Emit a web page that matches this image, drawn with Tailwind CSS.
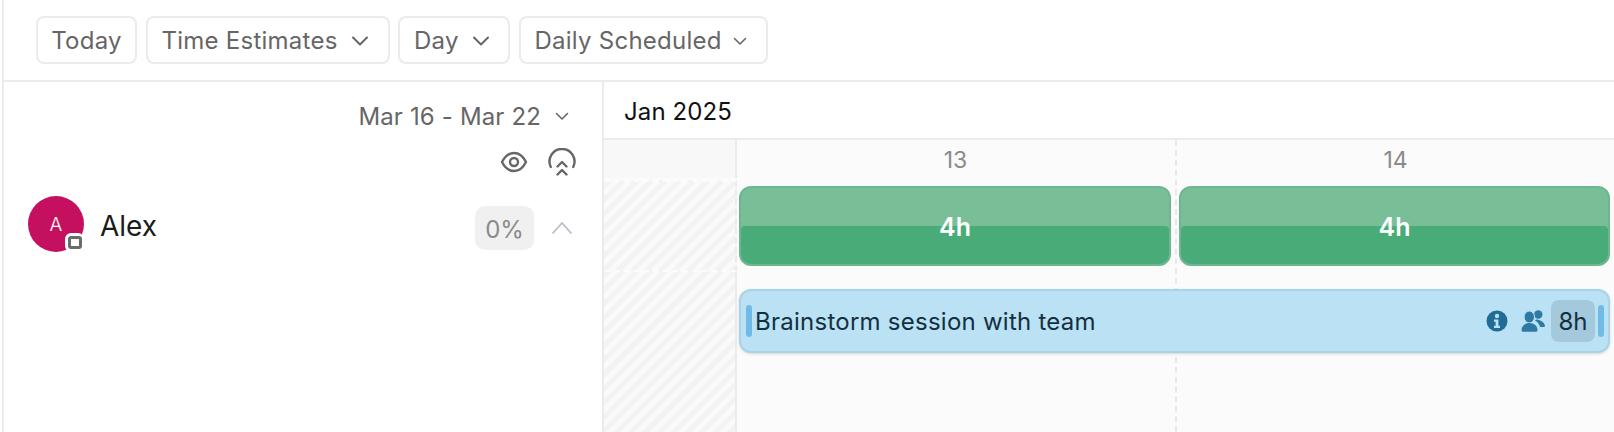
<!DOCTYPE html>
<html lang="en">
<head>
<meta charset="utf-8">
<title>Timeline</title>
<script src="https://cdn.jsdelivr.net/npm/@tailwindcss/browser@4"></script>
</head>
<body class="bg-white">
<div class="w-[1612px] h-[432px] overflow-hidden flex flex-col border-l-2 ml-[2px] border-[#ebebeb] font-['Inter',sans-serif] text-[#666666]">

  <!-- Toolbar -->
  <div class="h-[82px] shrink-0 border-b-2 border-[#ebebeb] flex items-start gap-[8.5px] pl-[32px] pt-[16px] text-[24px] leading-none tracking-[0.25px]">
    <button class="h-[48px] w-[101px] border-2 border-[#ebebeb] rounded-[8px] pt-[2px] flex items-center justify-center">Today</button>
    <button class="h-[48px] w-[244px] border-2 border-[#ebebeb] rounded-[8px] pt-[2px] flex items-center gap-[13px] pl-[14px]">
      Time Estimates
      <svg class="w-[18px] h-[18px]" viewBox="0 0 18 18" fill="none" stroke="#666" stroke-width="2" stroke-linecap="round" stroke-linejoin="round"><path d="M2 5.500 9 12.500 16 5.500"/></svg>
    </button>
    <button class="h-[48px] w-[112px] border-2 border-[#ebebeb] rounded-[8px] pt-[2px] flex items-center gap-[13px] pl-[14px]">
      Day
      <svg class="w-[18px] h-[18px]" viewBox="0 0 18 18" fill="none" stroke="#666" stroke-width="2" stroke-linecap="round" stroke-linejoin="round"><path d="M2 5.500 9 12.500 16 5.500"/></svg>
    </button>
    <button class="h-[48px] w-[249px] border-2 border-[#ebebeb] rounded-[8px] pt-[2px] flex items-center gap-[11px] pl-[14px]">
      Daily Scheduled
      <svg class="w-[14px] h-[14px]" viewBox="0 0 14 14" fill="none" stroke="#666" stroke-width="1.600" stroke-linecap="round" stroke-linejoin="round"><path d="M1.500 4.500 7 10 12.500 4.500"/></svg>
    </button>
  </div>

  <div class="flex flex-1 min-h-0">
    <!-- Left panel -->
    <div class="w-[600px] shrink-0 border-r-2 border-[#ebebeb] relative">
      <div class="flex justify-end items-center gap-[14px] pr-[33px] pt-[19px] text-[24px] leading-[28px] tracking-[0.15px]">
        <span class="mt-[2px]">Mar 16 - Mar 22</span>
        <svg class="w-[14px] h-[14px]" viewBox="0 0 14 14" fill="none" stroke="#666" stroke-width="1.600" stroke-linecap="round" stroke-linejoin="round"><path d="M1.500 4.500 7 10 12.500 4.500"/></svg>
      </div>
      <div class="flex justify-end items-center gap-[20px] pr-[26px] mt-[17px] h-[28px]">
        <svg class="w-[28px] h-[22px]" viewBox="0 0 28 22" fill="none" stroke="#666" stroke-width="2.400"><path d="M2 11C5 5 9 2 14 2s9 3 12 9c-3 6-7 9-12 9S5 17 2 11Z" stroke-linejoin="round"/><circle cx="14" cy="11" r="4"/></svg>
        <svg class="w-[28px] h-[28px]" viewBox="0 0 28 28" fill="none" stroke="#666" stroke-width="2.400" stroke-linecap="round" stroke-linejoin="round"><path d="M2.800 19A12.500 12.500 0 1 1 25.200 19"/><path d="M9.500 18.500 14 14 18.500 18.500"/><path d="M9.500 26.500 14 22 18.500 26.500"/></svg>
      </div>
      <div class="flex items-start pl-[24px] mt-[20px] pr-[29px]">
        <div class="relative w-[56px] h-[56px] rounded-full bg-[#c5105f] text-white text-[19px] font-light pt-[3px] flex items-center justify-center shrink-0">
          A
          <span class="absolute right-0 bottom-0 w-[19px] h-[19px] rounded-[6px] bg-white flex items-center justify-center">
            <span class="w-[14px] h-[13px] rounded-[3px] border-[3px] border-[#6b6b6b]"></span>
          </span>
        </div>
        <span class="ml-[16px] mt-[13px] text-[28px] leading-[34px] text-[#1c1c1c]">Alex</span>
        <span class="ml-auto mt-[10px] w-[59px] h-[44px] rounded-[10px] bg-[#f0f0f0] pt-[4px] flex items-center justify-center text-[24px] text-[#8a8a8a]">0%</span>
        <svg class="ml-[17px] mt-[23px] w-[22px] h-[16px]" viewBox="0 0 22 16" fill="none" stroke="#b9bec8" stroke-width="1.800" stroke-linecap="round" stroke-linejoin="round"><path d="M2 14 11 4 20 14"/></svg>
      </div>
    </div>

    <!-- Timeline -->
    <div class="flex-1 min-w-0 flex flex-col">
      <div class="h-[58px] shrink-0 border-b-2 border-[#ebebeb] pt-[4px] flex items-center pl-[20px] text-[24px] tracking-[0.1px] text-[#111111]">Jan 2025</div>
      <div class="flex-1 grid grid-cols-[133px_440px_437px] grid-rows-[40px_92px_1fr] bg-[#fbfbfb]">
        <!-- column backgrounds -->
        <div class="col-start-1 row-start-1 mb-[2px] bg-[#f8f8f8] border-r-2 border-[#ebebeb]"></div>
        <div class="col-start-1 row-start-2 border-r-2 border-y-2 border-dashed border-r-[#ebebeb] border-y-[#fcfcfc] bg-[repeating-linear-gradient(135deg,#f3f3f3_0,#f3f3f3_5px,#fafafa_5px,#fafafa_10px)]"></div>
        <div class="col-start-1 row-start-3 border-r-2 border-[#ebebeb] bg-[repeating-linear-gradient(135deg,#f3f3f3_0,#f3f3f3_5px,#fafafa_5px,#fafafa_10px)]"></div>
        <div class="col-start-2 row-start-1 row-span-3 border-r-2 border-dashed border-[#e8e8e8]"></div>
        <!-- day labels -->
        <div class="col-start-2 row-start-1 pr-[3px] flex items-center justify-center text-[23px] text-[#8a8a8a]">13</div>
        <div class="col-start-3 row-start-1 flex items-center justify-center text-[23px] text-[#8a8a8a]">14</div>
        <!-- capacity bars -->
        <div class="col-start-2 row-start-2 relative ml-[2px] mr-[6px] mt-[6px] h-[80px] rounded-[12px] border-2 border-[#6fb592] bg-[#78bf98] overflow-hidden">
          <div class="absolute left-0 right-0 bottom-0 h-[38px] bg-[#49ac78] rounded-[4px]"></div>
          <div class="absolute inset-0 pt-[4px] flex items-center justify-center text-white text-[25px] font-semibold">4h</div>
        </div>
        <div class="col-start-3 row-start-2 relative ml-[2px] mr-[4px] mt-[6px] h-[80px] rounded-[12px] border-2 border-[#6fb592] bg-[#78bf98] overflow-hidden">
          <div class="absolute left-0 right-0 bottom-0 h-[38px] bg-[#49ac78] rounded-[4px]"></div>
          <div class="absolute inset-0 pt-[4px] flex items-center justify-center text-white text-[25px] font-semibold">4h</div>
        </div>
        <!-- task -->
        <div class="col-start-2 col-span-2 row-start-3 self-start ml-[2px] mr-[4px] mt-[17px] h-[64px] rounded-[12px] border-2 border-[#a9d3e8] bg-[#bbe1f5] shadow-[0_1px_3px_rgba(0,0,0,0.15)] flex items-center pl-[5px] pr-[4px] z-10">
          <span class="w-[6px] h-[32px] rounded-full bg-[#6fbbe6] shrink-0"></span>
          <span class="ml-[3px] mt-[2px] text-[24px] tracking-[0.25px] text-[#12303f]">Brainstorm session with team</span>
          <svg class="ml-auto w-[22px] h-[22px]" viewBox="0 0 22 22"><circle cx="11" cy="11" r="10.500" fill="#1f6c97"/><circle cx="11" cy="6" r="2.200" fill="#bbe1f5"/><path d="M8 9.500h4.400v6.300H14V18H8v-2.200h1.600v-4.100H8Z" fill="#bbe1f5"/></svg>
          <svg class="ml-[13px] w-[24px] h-[22px]" viewBox="0 0 24 22" fill="#2f7aa3"><circle cx="17.300" cy="4.500" r="4.200"/><path d="M15 9.500c4 0 8 2.500 9 6 .2 1-1 1.500-2 1.500h-3c-.5-3-2.500-5-5-6.500Z"/><ellipse cx="8.300" cy="7" rx="5.200" ry="6" stroke="#bbe1f5"/><path d="M.5 20c0-4 3.500-7 8-7s8 3 8 7c0 1.300-1 1.800-2 1.800H2.500C1.500 21.800.5 21.300.5 20Z"/></svg>
          <span class="ml-[6px] w-[44px] h-[42px] rounded-[8px] bg-[#a5c9dc] pt-[2px] flex items-center justify-center text-[24px] text-[#12303f]">8h</span>
          <span class="ml-[3px] w-[6px] h-[32px] rounded-full bg-[#6fbbe6] shrink-0"></span>
        </div>
      </div>
    </div>
  </div>
</div>
</body>
</html>
